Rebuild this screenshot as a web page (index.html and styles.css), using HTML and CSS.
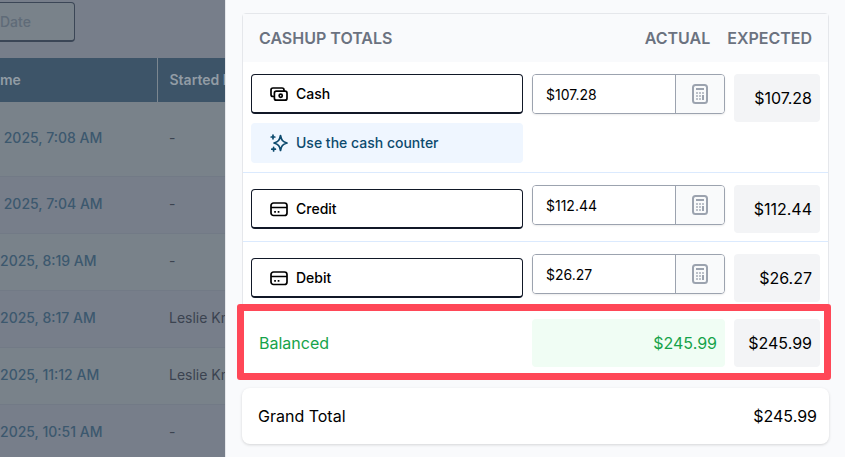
FILE: index.html
```html
<!DOCTYPE html>
<html lang="en">
<head>
  <meta charset="UTF-8">
  <meta name="viewport" content="width=device-width, initial-scale=1.0">
  <title>Cashup Totals</title>
  <link rel="stylesheet" href="styles.css">
</head>
<body>
  <svg class="sprite" aria-hidden="true">
    <symbol id="icon-calculator" viewBox="0 0 16 20">
      <rect x="1" y="1" width="14" height="18" rx="2.5" fill="none" stroke="currentColor" stroke-width="2" />
      <path d="M4 5h8" stroke="currentColor" stroke-width="2" />
      <path d="M4 9h2M7 9h2M10 9h2M4 12h2M7 12h2M4 15h2M7 15h2" stroke="currentColor" stroke-width="2" opacity="0.65" />
      <path d="M11 11v5" stroke="currentColor" stroke-width="2" />
    </symbol>
    <symbol id="icon-card" viewBox="0 0 18 16">
      <rect x="1" y="2" width="16" height="12.500" rx="2.500" fill="none" stroke="currentColor" stroke-width="1.700" />
      <path d="M1 6.500h16M4.200 10.800h1.700M7.700 10.800h1.700" fill="none" stroke="currentColor" stroke-width="1.700" />
    </symbol>
  </svg>

  <main class="page">
    <input class="date-filter" type="text" placeholder="Date" aria-label="Date">
    <table class="history">
      <thead>
        <tr><th>me</th><th>Started B</th></tr>
      </thead>
      <tbody>
        <tr class="tall"><td><a href="#">&nbsp;2025, 7:08 AM</a></td><td>-</td></tr>
        <tr><td><a href="#">&nbsp;2025, 7:04 AM</a></td><td>-</td></tr>
        <tr><td><a href="#">2025, 8:19 AM</a></td><td>-</td></tr>
        <tr><td><a href="#">2025, 8:17 AM</a></td><td>Leslie Kn</td></tr>
        <tr><td><a href="#">2025, 11:12 AM</a></td><td>Leslie Kn</td></tr>
        <tr><td><a href="#">2025, 10:51 AM</a></td><td>-</td></tr>
      </tbody>
    </table>
  </main>

  <aside class="drawer">
    <table class="totals">
      <thead>
        <tr>
          <th class="name">CASHUP TOTALS</th>
          <th>ACTUAL</th>
          <th>EXPECTED</th>
        </tr>
      </thead>
      <tbody>
        <tr class="with-counter">
          <td class="name">
            <button class="method" type="button">
              <svg class="icon" viewBox="0 0 18 16" fill="none" stroke="currentColor" stroke-width="1.7" stroke-linejoin="round">
                <path d="M4.200 10.500H3a2 2 0 0 1-2-2V4a2 2 0 0 1 2-2h9a2 2 0 0 1 2 2v1" />
                <rect x="4.400" y="5.200" width="12.600" height="9" rx="2" />
                <circle cx="10.700" cy="9.700" r="1.600" />
              </svg>
              Cash
            </button>
            <button class="method counter" type="button">
              <svg class="icon" viewBox="0 0 18 18" fill="none" stroke="currentColor" stroke-width="1.7" stroke-linejoin="round" stroke-linecap="round">
                <path d="M10.500 1.500c.9 4.700 2 6.300 6.500 7.500-4.500 1.200-5.600 2.800-6.500 7.500-.9-4.700-2-6.300-6.500-7.500 4.500-1.200 5.600-2.800 6.500-7.500z" />
                <path d="M3 1.200v3.600M1.200 3h3.600M3.600 13.400v3.600M1.800 15.200h3.600" />
              </svg>
              Use the cash counter
            </button>
          </td>
          <td class="actual">
            <div class="amount">
              <input type="text" value="$107.28" aria-label="Actual cash">
              <button type="button" aria-label="Calculate cash"><svg class="calc"><use href="#icon-calculator" /></svg></button>
            </div>
          </td>
          <td class="expected"><div class="tile">$107.28</div></td>
        </tr>
        <tr>
          <td class="name">
            <button class="method" type="button"><svg class="icon"><use href="#icon-card" /></svg>Credit</button>
          </td>
          <td class="actual">
            <div class="amount">
              <input type="text" value="$112.44" aria-label="Actual credit">
              <button type="button" aria-label="Calculate credit"><svg class="calc"><use href="#icon-calculator" /></svg></button>
            </div>
          </td>
          <td class="expected"><div class="tile">$112.44</div></td>
        </tr>
        <tr>
          <td class="name">
            <button class="method" type="button"><svg class="icon"><use href="#icon-card" /></svg>Debit</button>
          </td>
          <td class="actual">
            <div class="amount">
              <input type="text" value="$26.27" aria-label="Actual debit">
              <button type="button" aria-label="Calculate debit"><svg class="calc"><use href="#icon-calculator" /></svg></button>
            </div>
          </td>
          <td class="expected"><div class="tile">$26.27</div></td>
        </tr>
      </tbody>
      <tfoot>
        <tr class="balanced">
          <td class="name">Balanced</td>
          <td class="actual"><div class="tile ok">$245.99</div></td>
          <td class="expected"><div class="tile">$245.99</div></td>
        </tr>
      </tfoot>
    </table>

    <div class="grand-total">
      <span>Grand Total</span>
      <span>$245.99</span>
    </div>
  </aside>
</body>
</html>
```

FILE: styles.css
```css
* {
  box-sizing: border-box;
}
body {
  margin: 0;
  min-height: 100vh;
  display: flex;
  overflow: hidden;
  font-family: Inter, "Liberation Sans", sans-serif;
  font-size: 16px;
  line-height: 24px;
  color: #000;
  background-color: #777e8a;
}
button, input {
  font-family: inherit;
  font-size: 14px;
  color: inherit;
  margin: 0;
}
button {
  cursor: pointer;
}
table {
  border-spacing: 0;
  border-collapse: collapse;
}
.sprite {
  display: none;
}

/* Page behind the drawer, already dimmed */
.page {
  flex: 0 0 225px;
  height: 100vh;
  padding-top: 2px;
  overflow: hidden;
  font-size: 14px;
  line-height: 20px;
}
.date-filter {
  display: block;
  width: 75px;
  height: 40px;
  margin-bottom: 16px;
  padding: 0;
  border: 1px solid #3b4656;
  border-left: none;
  border-bottom-width: 2px;
  border-radius: 0 4px 4px 0;
  background-color: #79828a;
  font-weight: 500;
}
.date-filter::placeholder {
  color: #5f6b78;
  opacity: 1;
}
.history {
  width: 100%;
  table-layout: fixed;
}
.history th, .history td {
  padding: 0 0 0 12px;
  text-align: left;
  white-space: nowrap;
  overflow: hidden;
}
.history th {
  height: 44px;
  font-weight: 600;
  color: #929ca5;
  background-color: #3d5468;
}
.history th:first-child, .history td:first-child {
  width: 157px;
  padding-left: 0;
}
.history th:last-child {
  border-left: 1px solid #7c8790;
}
.history td {
  height: 57px;
  padding-bottom: 2px;
  color: #3b4350;
  border-bottom: 1px solid #727a86;
}
.history .tall td {
  height: 74px;
}
.history tbody tr:nth-child(odd) {
  background-color: #79828a;
}
.history a {
  font-weight: 500;
  color: #3c586e;
  text-decoration: none;
}

/* Drawer */
.drawer {
  flex: 1;
  min-width: 0;
  padding: 13px 16px;
  border-left: 1px solid #e5e7eb;
  background-color: #f9fafc;
}
.totals {
  display: block;
  border: 1px solid #e5e7eb;
  border-radius: 4px;
  background-color: #fff;
  margin-bottom: 12px;
}
.totals thead, .totals tbody, .totals tfoot {
  display: block;
}
.totals tr {
  display: flex;
  gap: 9px;
  padding: 12px 8px 8px;
  border-bottom: 1px solid #dbeafe;
}
.totals th, .totals td {
  display: block;
  padding: 0;
}
.totals thead tr {
  gap: 17px;
  padding: 12px 16px;
  border-bottom: none;
  background-color: #f9fafc;
}
.totals th {
  font-weight: 600;
  color: #6b7280;
}
.totals .name {
  flex: 1;
  min-width: 0;
  text-align: left;
  align-self: center;
}
.totals .actual {
  flex: 0 0 193px;
  min-width: 0;
}
.totals .expected {
  flex: 0 0 86px;
}
.totals .with-counter {
  padding-bottom: 9px;
}
.method {
  display: flex;
  align-items: center;
  gap: 8px;
  width: 100%;
  height: 40px;
  padding: 0 18px;
  border: 1px solid #111827;
  border-bottom-width: 2px;
  border-radius: 4px;
  background-color: #fff;
  font-weight: 500;
}
.counter {
  margin-top: 9px;
  border-color: #eff6ff;
  background-color: #eff6ff;
  color: #0c4a6e;
}
.icon {
  flex: none;
  width: 18px;
  height: 18px;
}
.amount {
  display: flex;
  height: 40px;
  border: 1px solid #9ca3af;
  border-radius: 4px;
  box-shadow: 0 1px 2px rgba(0, 0, 0, 0.08);
  background-color: #fff;
  overflow: hidden;
}
.amount input {
  flex: 1;
  min-width: 0;
  padding: 0 13px;
  border: none;
  background-color: #fff;
}
.amount button {
  display: flex;
  align-items: center;
  justify-content: center;
  flex: 0 0 49px;
  padding: 0;
  border: none;
  border-left: 1px solid #9ca3af;
  background-color: #f9fafb;
  color: #9ca3af;
}
.calc {
  width: 16px;
  height: 20px;
}
.tile {
  padding: 12px 8px;
  border-radius: 4px;
  background-color: #f3f4f6;
  text-align: right;
}
.tile.ok {
  background-color: #f0fdf4;
  color: #16a34a;
}
.totals .balanced {
  position: relative;
  padding: 8px;
  border-bottom: none;
}
.balanced .name {
  padding-left: 8px;
  color: #16a34a;
}
/* Red frame around the balanced row */
.balanced::after {
  content: "";
  position: absolute;
  inset: -7px -3px -5px -6px;
  border: 7px solid #ff4757;
  border-radius: 3px;
  pointer-events: none;
}
.grand-total {
  display: flex;
  justify-content: space-between;
  padding: 16px 12px 16px 16px;
  border-radius: 8px;
  background-color: #fff;
  box-shadow: 0 1px 3px rgba(0, 0, 0, 0.15);
}
```
